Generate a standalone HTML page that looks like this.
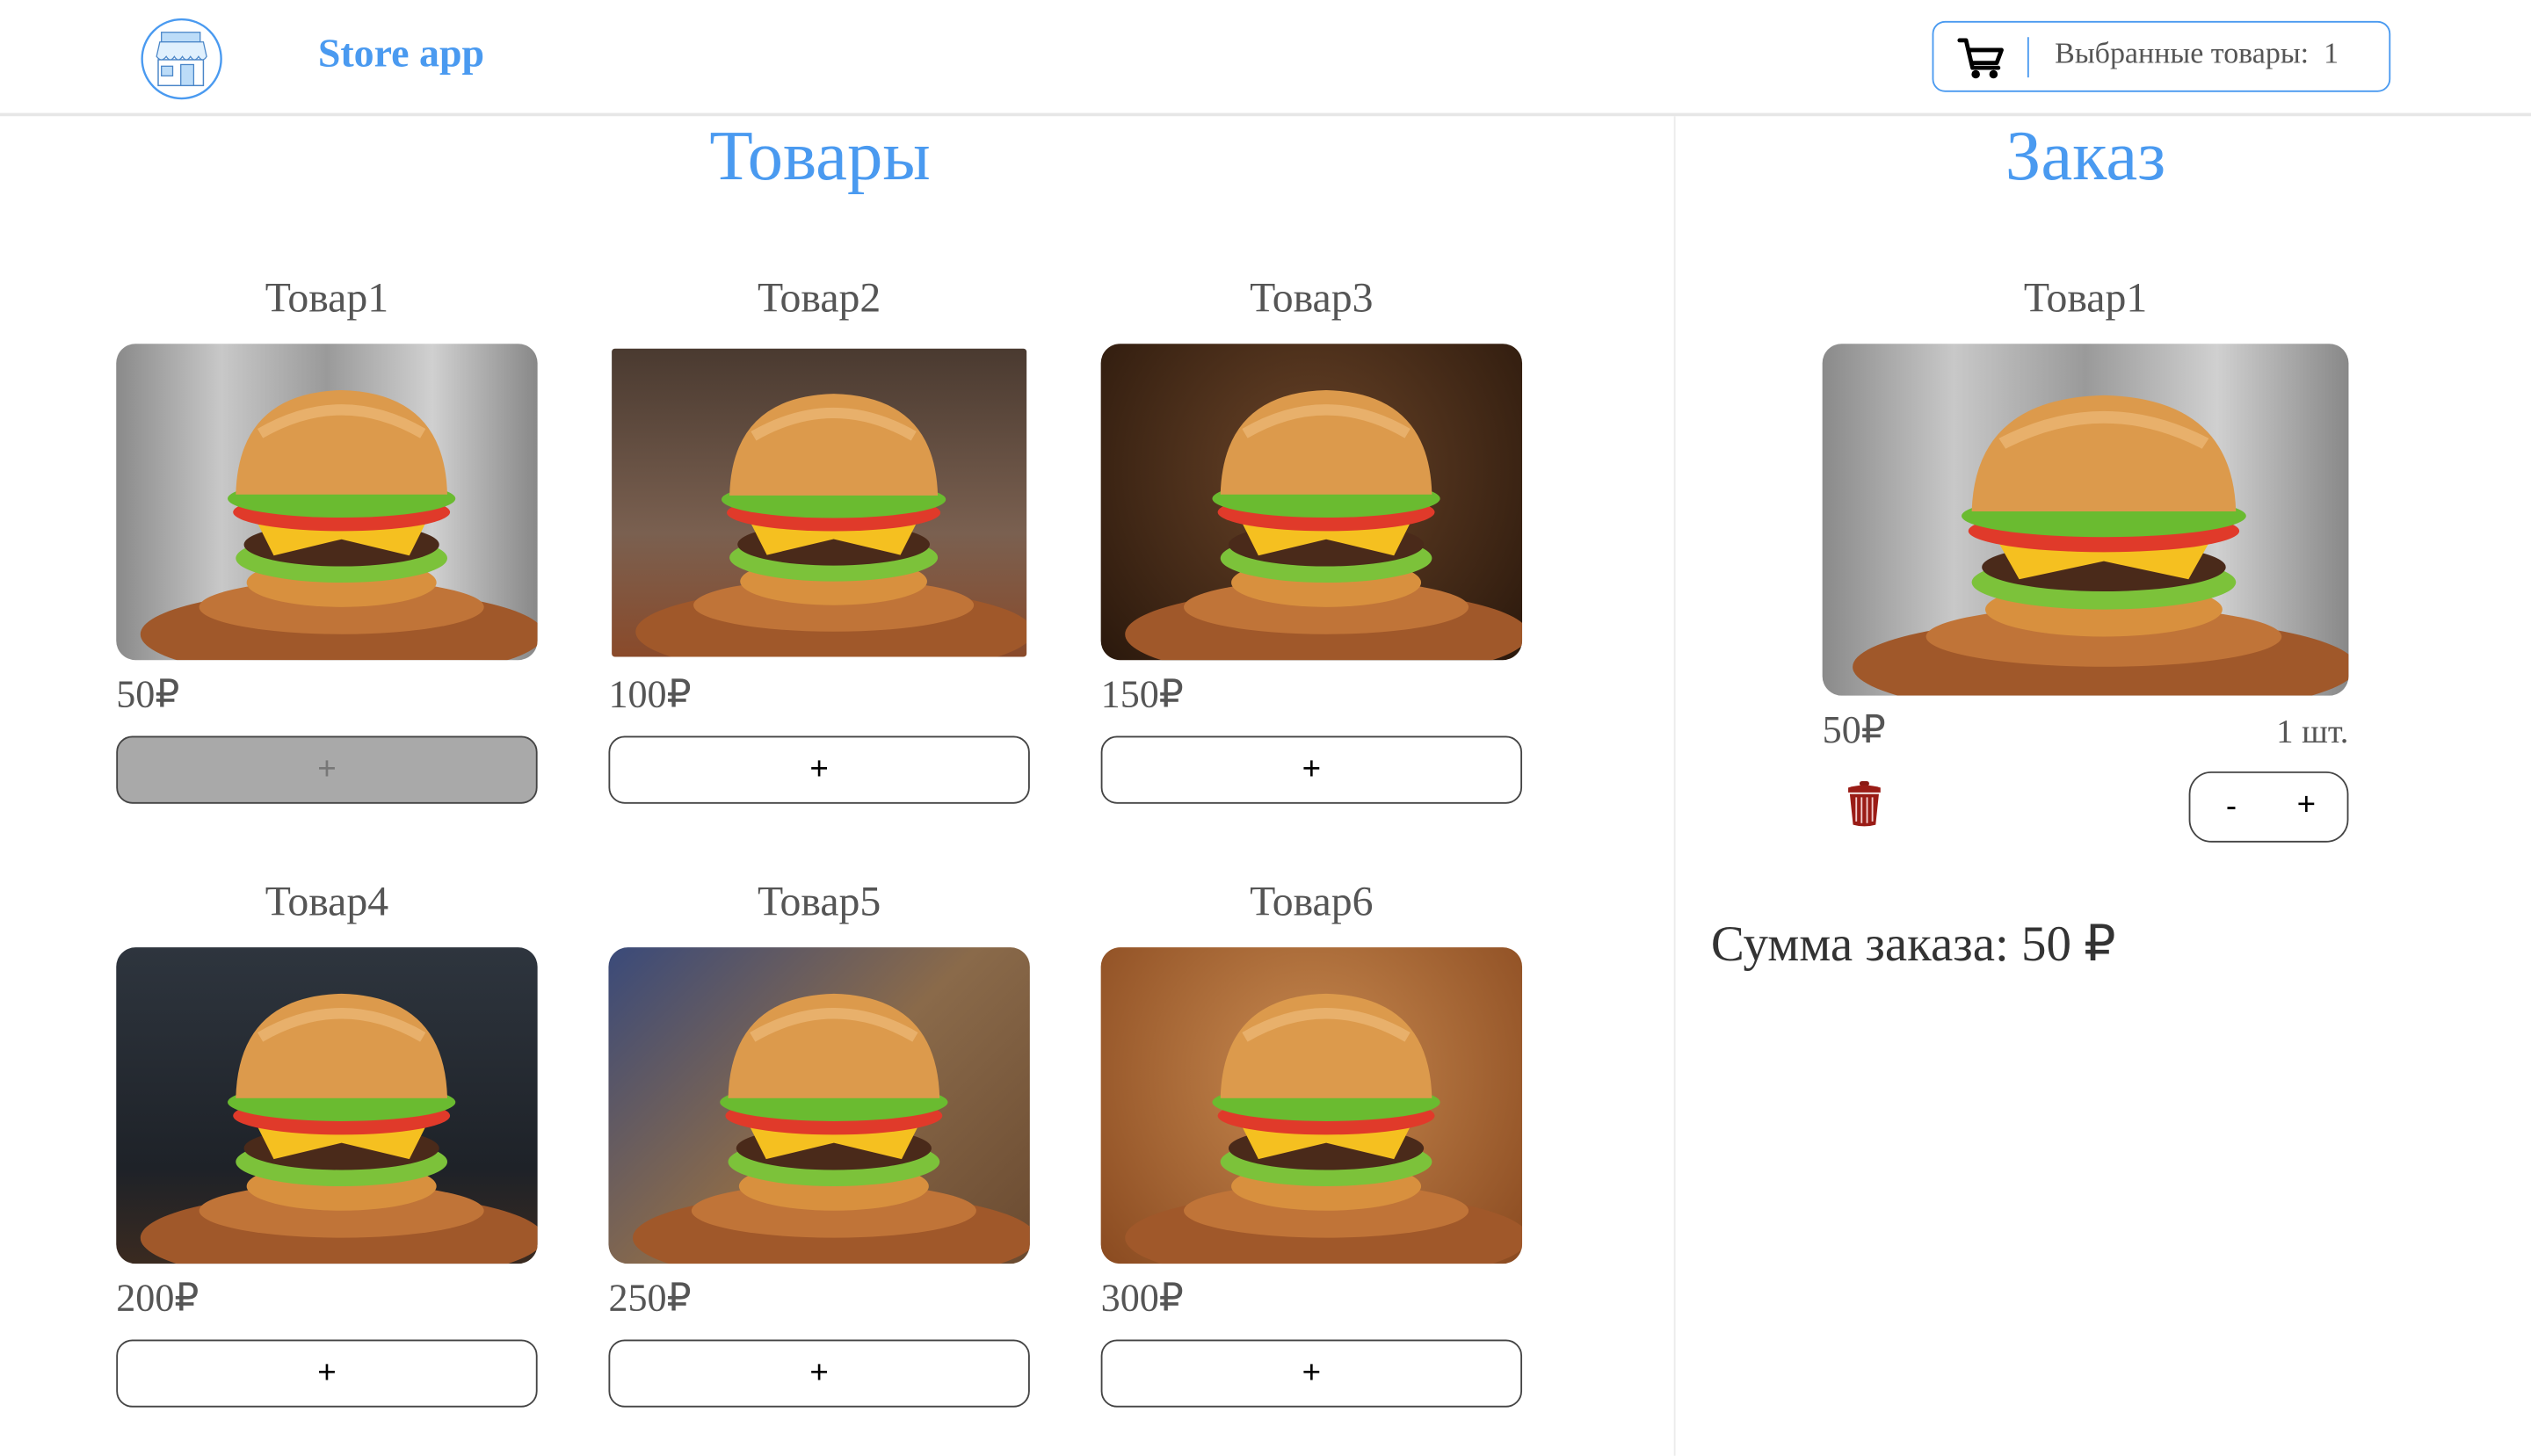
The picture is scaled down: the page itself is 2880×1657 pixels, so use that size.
<!DOCTYPE html>
<html><head><meta charset="utf-8">
<style>
html,body{margin:0;padding:0;background:#fff;overflow:hidden}
body{width:2880px;height:1642px}
#w{position:absolute;left:0;top:0;width:1568px;height:894px;transform:scale(1.83673);transform-origin:0 0;font-family:"Liberation Serif","Noto Serif CJK SC",serif;color:#555}
.a{position:absolute}
.hdr{left:0;top:0;width:1568px;height:70px;border-bottom:2px solid #e6e6e6}
.vd{left:1037px;top:72px;width:1px;height:830px;background:#ececec}
.h1{color:#4a9af0;font-size:44px;width:400px;text-align:center;top:71px}
.t{font-size:26px;width:261px;text-align:center}
.img{border-radius:12px;overflow:hidden}
.img svg{display:block;width:100%;height:100%}
.pr{font-size:24px;color:#555}
.btn{width:259px;height:40px;border:1px solid #444;border-radius:10px;text-align:center;line-height:40px;font-family:"Liberation Sans",sans-serif;font-size:20px;color:#000}
</style></head><body><div id="w">
<svg width="0" height="0" style="position:absolute">
<defs>
<symbol id="bg" viewBox="0 0 261 196">
<ellipse cx="140" cy="180" rx="125" ry="28" fill="#a0582a"/>
<g transform="translate(22,22) scale(0.84)">
<ellipse cx="140" cy="168" rx="105" ry="20" fill="#c07438"/>
<ellipse cx="140" cy="150" rx="70" ry="18" fill="#d8903e"/>
<ellipse cx="140" cy="132" rx="78" ry="18" fill="#7cc23a"/>
<ellipse cx="140" cy="122" rx="72" ry="16" fill="#4a2a1a"/>
<path d="M75 100 L205 100 L190 130 L140 118 L90 130 Z" fill="#f5c020"/>
<ellipse cx="140" cy="98" rx="80" ry="14" fill="#e03a2a"/>
<ellipse cx="140" cy="88" rx="84" ry="14" fill="#6abb30"/>
<path d="M62 85 Q64 10 140 8 Q216 10 218 85 Z" fill="#dc9a4c"/>
<path d="M80 40 Q140 5 200 40" stroke="#f0c080" stroke-width="8" fill="none" opacity=".6"/>
</g>
</symbol>
</defs></svg>

<div class="a hdr"></div>
<svg class="a" style="left:87px;top:11px" width="51" height="51" viewBox="0 0 51 51">
<circle cx="25.5" cy="25.5" r="24.5" fill="none" stroke="#4a9af0" stroke-width="1.3"/>
<rect x="11" y="26" width="28" height="16" fill="#fff" stroke="#4a86c8" stroke-width="0.8"/>
<rect x="13" y="30" width="7" height="6" fill="#bcdcf8" stroke="#4a86c8" stroke-width="0.7"/>
<rect x="25" y="29" width="8" height="13" fill="#bcdcf8" stroke="#4a86c8" stroke-width="0.7"/>
<rect x="13" y="9" width="24" height="6" fill="#bcdcf8" stroke="#4a86c8" stroke-width="0.7"/>
<path d="M10 24 L12 15 L39 15 L41 24 Q38.5 28 36 24 Q33.5 28 31 24 Q28.5 28 26 24 Q23.5 28 21 24 Q18.5 28 16 24 Q13 28 10 24Z" fill="#e0f0fd" stroke="#4a86c8" stroke-width="0.7"/>
</svg>
<div class="a" style="left:197px;top:20px;font-size:25px;color:#4a9af0;font-weight:bold">Store app</div>

<div class="a" style="left:1197px;top:13px;width:282px;height:42px;border:1.5px solid #4a9af0;border-radius:8px"></div>
<svg class="a" style="left:1212px;top:22px" width="32" height="28" viewBox="0 0 32 28">
<path d="M2 3 H6 L10 20 H26" stroke="#000" stroke-width="2.6" fill="none" stroke-linecap="round" stroke-linejoin="round"/>
<path d="M8 9 H28 L25 17 H10" stroke="#000" stroke-width="2.6" fill="none" stroke-linejoin="round"/>
<circle cx="12" cy="24" r="2.6"/><circle cx="23" cy="24" r="2.6"/>
</svg>
<div class="a" style="left:1256px;top:23px;width:1px;height:25px;background:#4a9af0"></div>
<div class="a" style="left:1273px;top:24px;font-size:18.5px;color:#555;white-space:pre">Выбранные товары:  1</div>

<div class="a vd"></div>
<div class="a h1" style="left:308px">Товары</div>
<div class="a h1" style="left:1092px">Заказ</div>

<div class="a t" style="left:72px;top:170px">Товар1</div>
<div class="a t" style="left:377px;top:170px">Товар2</div>
<div class="a t" style="left:682px;top:170px">Товар3</div>
<div class="a img" style="left:72px;top:213px;width:261px;height:196px;background:linear-gradient(90deg,#8a8a8a,#c8c8c8,#9a9a9a,#d0d0d0,#888)"><svg><use href="#bg"/></svg></div>
<div class="a img" style="left:379px;top:216px;width:257px;height:191px;border-radius:2px;background:linear-gradient(#4a3a30,#7a6050 60%,#8a4a2a)"><svg viewBox="0 0 261 196" preserveAspectRatio="none"><use href="#bg"/></svg></div>
<div class="a img" style="left:682px;top:213px;width:261px;height:196px;background:radial-gradient(circle at 50% 40%,#6a4428,#2a180c)"><svg><use href="#bg"/></svg></div>
<div class="a pr" style="left:72px;top:416px">50₽</div>
<div class="a pr" style="left:377px;top:416px">100₽</div>
<div class="a pr" style="left:682px;top:416px">150₽</div>
<div class="a btn" style="left:72px;top:456px;background:#a9a9a9;color:#777">+</div>
<div class="a btn" style="left:377px;top:456px">+</div>
<div class="a btn" style="left:682px;top:456px">+</div>

<div class="a t" style="left:72px;top:544px">Товар4</div>
<div class="a t" style="left:377px;top:544px">Товар5</div>
<div class="a t" style="left:682px;top:544px">Товар6</div>
<div class="a img" style="left:72px;top:587px;width:261px;height:196px;background:linear-gradient(#2e353e,#1e2228 70%,#3a2a20)"><svg><use href="#bg"/></svg></div>
<div class="a img" style="left:377px;top:587px;width:261px;height:196px;background:linear-gradient(135deg,#3a4a7a,#8a6a4a 50%,#6a4a30)"><svg><use href="#bg"/></svg></div>
<div class="a img" style="left:682px;top:587px;width:261px;height:196px;background:radial-gradient(circle at 50% 40%,#c88a50,#8a4a20)"><svg><use href="#bg"/></svg></div>
<div class="a pr" style="left:72px;top:790px">200₽</div>
<div class="a pr" style="left:377px;top:790px">250₽</div>
<div class="a pr" style="left:682px;top:790px">300₽</div>
<div class="a btn" style="left:72px;top:830px">+</div>
<div class="a btn" style="left:377px;top:830px">+</div>
<div class="a btn" style="left:682px;top:830px">+</div>

<div class="a t" style="left:1129px;top:170px;width:326px">Товар1</div>
<div class="a img" style="left:1129px;top:213px;width:326px;height:218px;background:linear-gradient(90deg,#8a8a8a,#c8c8c8,#9a9a9a,#d0d0d0,#888)"><svg viewBox="0 0 261 196" preserveAspectRatio="none"><use href="#bg"/></svg></div>
<div class="a pr" style="left:1129px;top:438px">50₽</div>
<div class="a" style="left:1370px;top:441px;width:85px;text-align:right;font-size:21px;color:#555">1 шт.</div>
<svg class="a" style="left:1143px;top:483px" width="24" height="30" viewBox="0 0 24 30">
<rect x="9" y="1" width="6" height="3" rx="1.5" fill="#8a1a14"/>
<path d="M2 5 Q12 2 22 5 L22 8 L2 8Z" fill="#9a1c16"/>
<path d="M3 9 H21 L19 28 Q12 30 5 28Z" fill="#9a1c16"/>
<path d="M7 11V26M10.3 11V27M13.7 11V27M17 11V26" stroke="#f4d0d0" stroke-width="1"/>
</svg>
<div class="a" style="left:1356px;top:478px;width:97px;height:42px;border:1px solid #444;border-radius:14px;font-family:'Liberation Sans',sans-serif;font-size:20px;color:#000">
<span class="a" style="left:22px;top:10px">-</span><span class="a" style="left:66px;top:9px">+</span></div>
<div class="a" style="left:1060px;top:567px;font-size:31px;color:#333">Сумма заказа: 50 ₽</div>
</div></body></html>
